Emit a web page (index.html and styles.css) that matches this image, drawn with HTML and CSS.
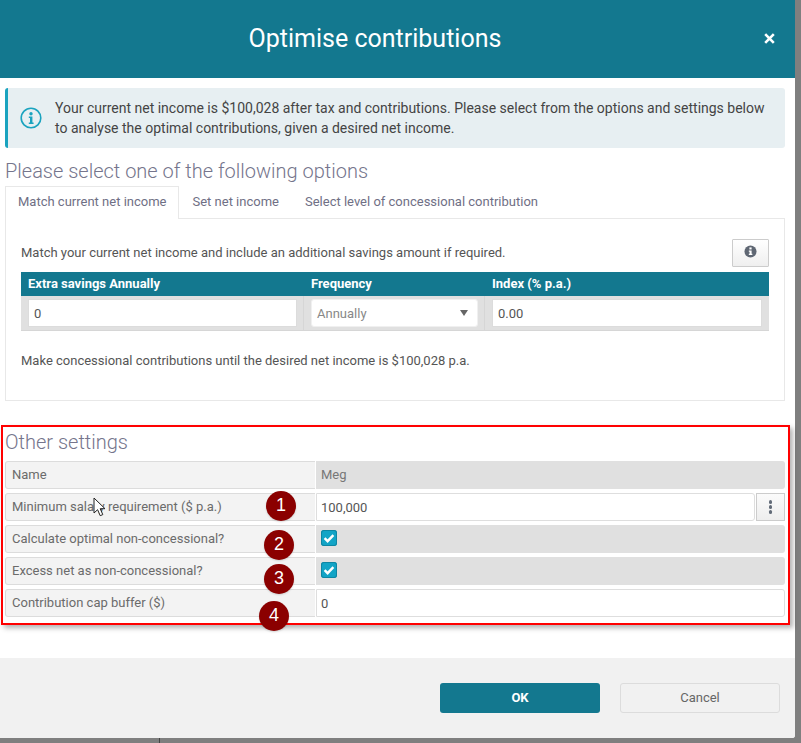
FILE: index.html
```html
<!DOCTYPE html>
<html lang="en">
<head>
<meta charset="utf-8">
<title>Optimise contributions</title>
<link rel="stylesheet" href="styles.css">
</head>
<body>
<div class="page">
  <div class="modal">
    <header class="modal-header">
      <h1 class="modal-title">Optimise contributions</h1>
      <span class="modal-close"><svg viewBox="0 0 11 11" width="11" height="11"><path d="M1.2 1.2l8.6 8.6M9.8 1.2l-8.6 8.6" fill="none" stroke="#fff" stroke-width="2.6"/></svg></span>
    </header>
    <main class="modal-body">
      <div class="alert">
        <svg class="alert-icon" viewBox="0 0 22 22" width="22" height="22"><circle cx="11" cy="11" r="9.8" fill="none" stroke="#1aa3bf" stroke-width="1.6"/><circle cx="11" cy="6.8" r="1.7" fill="#1aa3bf"/><path d="M8.8 9.6h3.6v6h1.2v1.5H8.8v-1.5H10v-4.5H8.8z" fill="#1aa3bf"/></svg>
        <p class="alert-text">Your current net income is $100,028 after tax and contributions. Please select from the options and settings below to analyse the optimal contributions, given a desired net income.</p>
      </div>
      <h2 class="section-title first">Please select one of the following options</h2>
      <div class="tabs">
        <span class="tab active">Match current net income</span>
        <span class="tab">Set net income</span>
        <span class="tab">Select level of concessional contribution</span>
      </div>
      <section class="panel">
        <div class="panel-top">
          <p class="panel-text">Match your current net income and include an additional savings amount if required.</p>
          <button class="info-btn" type="button"><svg viewBox="0 0 14 14" width="13" height="13"><circle cx="7" cy="7" r="6.5" fill="#5f6773"/><rect x="5.8" y="2.6" width="2.4" height="2.2" fill="#fff"/><path d="M5.2 5.8h3v3.6h.8v1.4H5.2V9.4H6V7.2h-.8z" fill="#fff"/></svg></button>
        </div>
        <div class="grid-table">
          <div class="gt-head">Extra savings Annually</div>
          <div class="gt-head">Frequency</div>
          <div class="gt-head">Index (% p.a.)</div>
          <div class="gt-cell"><div class="field">0</div></div>
          <div class="gt-cell"><div class="field select"><span>Annually</span><i class="caret"></i></div></div>
          <div class="gt-cell last"><div class="field">0.00</div></div>
        </div>
        <p class="panel-note">Make concessional contributions until the desired net income is $100,028 p.a.</p>
      </section>
      <h2 class="section-title second">Other settings</h2>
      <div class="settings">
        <div class="s-row"><div class="s-label">Name</div><div class="s-value head">Meg</div></div>
        <div class="s-row"><div class="s-label">Minimum salary requirement ($ p.a.)</div><div class="s-value plain"><div class="s-input">100,000</div><button class="dots-btn" type="button"><i></i><i></i><i></i></button></div></div>
        <div class="s-row"><div class="s-label">Calculate optimal non-concessional?</div><div class="s-value"><span class="check"><svg viewBox="0 0 16 16" width="16" height="16"><path d="M3.6 8.2l3 3 5.8-6" fill="none" stroke="#fff" stroke-width="2.4"/></svg></span></div></div>
        <div class="s-row"><div class="s-label">Excess net as non-concessional?</div><div class="s-value"><span class="check"><svg viewBox="0 0 16 16" width="16" height="16"><path d="M3.6 8.2l3 3 5.8-6" fill="none" stroke="#fff" stroke-width="2.4"/></svg></span></div></div>
        <div class="s-row"><div class="s-label">Contribution cap buffer ($)</div><div class="s-value plain"><div class="s-input whole">0</div></div></div>
      </div>
    </main>
    <footer class="modal-footer">
      <button class="btn primary" type="button">OK</button>
      <button class="btn ghost" type="button">Cancel</button>
    </footer>
  </div>
  <div class="backdrop-line"></div>
  <div class="red-box"></div>
  <span class="badge b1">1</span>
  <span class="badge b2">2</span>
  <span class="badge b3">3</span>
  <span class="badge b4">4</span>
  <svg class="cursor" viewBox="0 0 13 20" width="13" height="20"><path d="M1 1v15l3.6-3.3 2.6 6 2.6-1.1-2.6-5.9H12z" fill="#fff" stroke="#222" stroke-width="1"/></svg>
</div>
</body>
</html>
```
FILE: styles.css
```css
* { box-sizing: border-box; }
html, body { margin: 0; padding: 0; }
body { font-family: Roboto, "Liberation Sans", sans-serif; background: #7f7f7f; overflow: hidden; }
.page { position: relative; width: 801px; height: 743px; background: #7f7f7f; overflow: hidden; }
p, h1, h2 { margin: 0; }
button { font-family: inherit; padding: 0; cursor: pointer; }

.modal { width: 795px; height: 738px; background: #fff; display: flex; flex-direction: column; border-bottom-right-radius: 3px; overflow: hidden; }
.modal-header { height: 78px; flex: none; background: #13788f; display: flex; align-items: center; color: #fff; }
.modal-title { flex: 1; text-align: center; font-size: 25px; font-weight: 400; line-height: 30px; }
.modal-close { width: 38px; height: 11px; margin: 0 7px 2px 0; display: flex; justify-content: center; }

.modal-body { flex: 1; padding: 10px 10px 0 5px; display: flex; flex-direction: column; }
.alert { height: 60px; flex: none; background: #e7eff2; border-left: 3px solid #1aa3bf; border-radius: 3px; display: flex; align-items: center; padding: 0 10px 0 12px; gap: 13px; }
.alert-icon { flex: none; }
.alert-text { font-size: 14px; line-height: 20px; color: #444; }

.section-title { font-size: 20px; font-weight: 300; color: #75758c; line-height: 24px; }
.section-title.first { margin-top: 11px; }
.section-title.second { margin: 29px 0 7px; }

.tabs { display: flex; height: 33px; flex: none; margin-top: 3px; font-size: 13px; color: #6f6f85; }
.tab { padding: 0 13px; line-height: 31px; }
.tab.active { border: 1px solid #e8e8e8; border-bottom: 0; background: #fff; position: relative; z-index: 1; height: 33px; line-height: 29px; padding: 0 12px; }

.panel { height: 183px; flex: none; margin-top: -1px; border: 1px solid #e8e8e8; padding: 20px 15px 0; font-size: 13px; color: #555; }
.panel-top { display: flex; justify-content: space-between; align-items: center; height: 28px; margin-bottom: 5px; }
.panel-text { line-height: 26px; }
.info-btn { width: 37px; height: 28px; background: linear-gradient(#fff, #efefef); border: 1px solid #ccc; border-radius: 1px; display: flex; align-items: center; justify-content: center; padding-bottom: 4px; }
.grid-table { display: grid; grid-template-columns: 283px 181px 284px; }
.gt-head { background: #13788f; color: #fff; font-weight: 700; height: 24px; line-height: 23px; padding-left: 7px; }
.gt-cell { height: 35px; background: #e0e0e0; border-right: 1px solid #d6d6d6; border-bottom: 1px solid #d6d6d6; padding: 3px 6px 3px 7px; }
.gt-cell.last { border-right: 0; padding-right: 7px; }
.field { height: 28px; background: #fff; border: 1px solid #dcdcdc; padding-left: 5px; line-height: 27px; color: #555; display: flex; align-items: center; justify-content: space-between; }
.select { color: #888; border-radius: 3px; border-color: #f0f0f0; }
.caret { width: 0; height: 0; border-left: 4px solid transparent; border-right: 4px solid transparent; border-top: 6px solid #666; margin-right: 9px; }
.panel-note { margin-top: 20px; line-height: 20px; }

.settings { display: flex; flex-direction: column; gap: 4px; font-size: 13px; }
.s-row { height: 28px; display: flex; }
.s-label { width: 310px; flex: none; background: #f3f3f3; border-left: 1px solid #d8d8d8; border-top: 1px solid #dcdcdc; border-bottom: 1px solid #dcdcdc; border-radius: 3px 0 0 3px; padding-left: 6px; line-height: 25px; color: #6b6b6b; }
.s-value { margin-left: 1px; flex: 1; background: #e0e0e0; border-radius: 0 3px 3px 0; padding-left: 5px; display: flex; }
.s-value.head { color: #777; line-height: 27px; }
.s-value.plain { background: transparent; padding: 0; gap: 1px; }
.s-input { flex: 1; background: #fff; border: 1px solid #dedede; border-radius: 0 3px 3px 0; padding-left: 4px; line-height: 28px; color: #555; }
.dots-btn { width: 29px; flex: none; background: linear-gradient(#fbfbfb, #eee); border: 1px solid #ccc; display: flex; flex-direction: column; align-items: center; justify-content: center; gap: 1.5px; }
.dots-btn i { display: block; width: 3.5px; height: 3.5px; border-radius: 50%; background: #626b78; }
.check { width: 16px; height: 16px; margin-top: 5px; background: #12a4c6; border: 0; border-radius: 3px; box-shadow: inset 0 0 0 1px #0e86a3; display: block; }
.check svg { display: block; }

.modal-footer { height: 80px; flex: none; background: #f1f1f1; display: flex; justify-content: flex-end; gap: 20px; padding: 25px 15px 0 0; }
.btn { width: 160px; height: 30px; border-radius: 3px; font-size: 13px; padding-bottom: 2px; }
.btn.primary { background: #13788f; border: 0; color: #fff; font-weight: 700; }
.btn.ghost { background: #f1f1f1; border: 1px solid #dcdcdc; color: #666; }

.backdrop-line { position: absolute; left: 159px; top: 738px; width: 1px; height: 5px; background: #444; }
.red-box { position: absolute; left: 1px; top: 425px; width: 789px; height: 200px; border: 2px solid #f00; box-shadow: 3px 3px 5px rgba(0,0,0,.3); pointer-events: none; }
.badge { position: absolute; width: 30px; height: 30px; border-radius: 50%; background: #8b0000; color: #fff; font-family: "Liberation Sans", sans-serif; font-size: 18px; line-height: 29px; text-align: center; box-shadow: 0 1px 2px rgba(0,0,0,.15); }
.b1 { left: 266px; top: 491px; }
.b2 { left: 264px; top: 530px; }
.b3 { left: 264px; top: 564px; }
.b4 { left: 259px; top: 601px; }
.cursor { position: absolute; left: 93px; top: 497px; }
```
